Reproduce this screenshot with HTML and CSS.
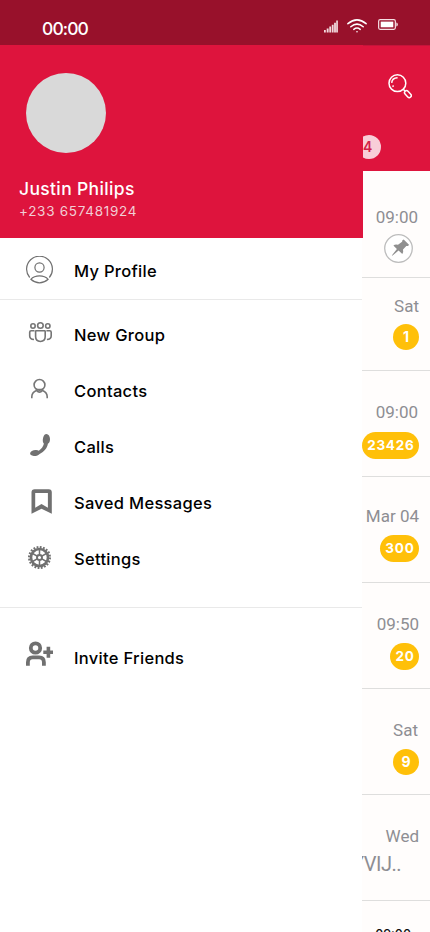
FILE: index.html
```html
<!DOCTYPE html>
<html lang="en">
<head>
<meta charset="utf-8">
<meta name="viewport" content="width=device-width, initial-scale=1">
<title>Messages</title>
<link rel="stylesheet" href="styles.css">
</head>
<body>
<div class="phone">
  <header class="status">
    <span class="clock">00:00</span>
    <div class="indicators">
      <svg class="signal" viewBox="0 0 14 13" fill="#f1d9dd"><path d="M0 10h1.800v2.500H0zM2.700 8.400h1.900v4.100H2.700zM5.300 6.600h1.800v5.900H5.300zM7.800 4.800h1.800v7.700H7.800zM10.100 2.700h1.800v9.800h-1.800zM12.200.5h1.700v12h-1.700z"/></svg>
      <svg class="wifi" viewBox="0 0 20 14" fill="none" stroke="#fff" stroke-width="1.500" stroke-linecap="round"><path d="M.9 4.700Q10-2.900 19.100 4.700M3.800 7.700Q10 2.500 16.200 7.700M6.800 10.400Q10 7.800 13.200 10.400"/><circle cx="10" cy="12.700" r=".8" fill="#fff" stroke="none"/></svg>
      <svg class="battery" viewBox="0 0 20 11"><rect x=".65" y=".65" width="16.700" height="9.700" rx="1.500" fill="none" stroke="#f6dfe3" stroke-width="1.200"/><rect x="2.700" y="2.600" width="12.600" height="5.700" fill="#fff"/><path d="M18.300 3.500q1.500 0 1.500 2t-1.500 2z" fill="#f6dfe3"/></svg>
    </div>
  </header>
  <div class="screen">
    <aside class="drawer">
      <div class="profile">
        <div class="avatar"></div>
        <div class="name">Justin Philips</div>
        <div class="number">+233 657481924</div>
      </div>
      <nav class="menu">
        <div class="group own">
          <a class="item"><svg class="icon" viewBox="0 0 28 28" fill="none" stroke="#707070" stroke-width="1.200"><path d="M3.700 21.500A12.900 12.900 0 1 1 23.300 21.500"/><circle cx="13.500" cy="11.500" r="4.600"/><path d="M4.800 23.300Q8 19.800 13.500 19.800t8.700 3.500Q18 26.900 13.500 26.900t-8.700-3.600z" stroke-linejoin="round"/></svg><span>My Profile</span></a>
        </div>
        <div class="group">
          <a class="item"><svg class="icon" viewBox="0 0 28 28" fill="none" stroke="#757575" stroke-width="1.600"><circle cx="7" cy="5" r="2.200"/><circle cx="14.400" cy="4.500" r="2.800"/><circle cx="21.800" cy="5" r="2.200"/><path d="M10.200 9.800h8.400q.6 0 .6.600v5.200q0 4.900-4.800 4.900t-4.800-4.900v-5.200q0-.6.600-.6zM8.500 9.800H5.200q-1.500 0-1.500 1.500v3.600q0 3.200 4.300 3.600M20.400 9.800h3.300q1.500 0 1.500 1.500v3.600q0 3.200-4.300 3.600"/></svg><span>New Group</span></a>
          <a class="item"><svg class="icon" viewBox="0 0 28 28" fill="none" stroke="#777" stroke-width="1.600"><circle cx="13.500" cy="7.900" r="5.400"/><path d="M5.800 21.200v-1.500q0-4.200 4.700-6.200 3 3.200 6 0 4.700 2 4.700 6.200v1.500M9.900 11.900q3.600 1.200 7.200 0"/></svg><span>Contacts</span></a>
          <a class="item"><svg class="icon" viewBox="0 0 28 28" fill="#707070"><path d="M20.300 1C22.600 1.200 24 3.400 24 6c0 2.300-.6 4.100-2.100 4.800-.6 4.200-3.600 7.900-8.300 10.100-1 1.400-3.400 2.100-5.800 2-2.500-.1-3.900-1.200-3.700-2.600.2-1.800 2.800-3.100 5.500-3.200 1.500-.1 2.600.3 3.200.7 2.500-1.700 4.400-4.200 5.100-7-.7-.7-1.200-2-1.100-3.700.2-3.300 1.700-6.300 3.500-6.100z"/></svg><span>Calls</span></a>
          <a class="item"><svg class="icon" viewBox="0 0 28 28"><path fill="#707070" fill-rule="evenodd" d="M8.700.2h14q3.100 0 3.100 3.100v21.400l-10.300-4.900-10 4.900V3.300q0-3.100 3.200-3.100zM9.200 4v14.800l6.300-3.700 6.400 3.700V4z"/></svg><span>Saved Messages</span></a>
          <a class="item"><svg class="icon" viewBox="0 0 28 28" fill="none" stroke="#707070"><circle cx="13.500" cy="12.500" r="8.500" stroke-width="2.600"/><circle cx="13.500" cy="12.500" r="10.400" stroke-width="2.200" stroke-dasharray="1.800 1.467"/><circle cx="13.500" cy="12.500" r="2.500" stroke-width="1.900"/><path d="M13.500 3.500v6.800M13.500 14.700v6.800M5.700 8l5.900 3.400M15.400 13.600l5.900 3.400M5.700 17l5.900-3.400M15.400 11.400L21.300 8" stroke-width="1.500"/></svg><span>Settings</span></a>
        </div>
        <div class="group invite">
          <a class="item"><svg class="icon" viewBox="0 0 28 28" fill="none" stroke="#707070" stroke-width="3.800"><circle cx="9.500" cy="8" r="4.700"/><path d="M1.900 25.700v-3.500q0-4.800 4.800-4.800h6.400q4.800 0 4.800 4.800v3.500"/><path d="M22.400 6.800v11M17.300 12.300h9.700" stroke-width="3.600"/></svg><span>Invite Friends</span></a>
        </div>
      </nav>
    </aside>
    <main class="chats">
      <div class="topbar">
        <svg class="search" viewBox="0 0 24 25" fill="none" stroke="#fff" stroke-width="1.500"><circle cx="9.400" cy="9.200" r="8.400"/><path d="M3.700 8.900Q4 3.900 9.600 3.700M4.600 11.500l.9 1.300M15.500 15.500l1.700 1.800"/><rect x="-2" y="-4" width="4" height="8" rx="2" transform="translate(19.900 20.100) rotate(-43)"/></svg>
        <span class="unread">4</span>
      </div>
      <div class="row first"><time>09:00</time><svg class="pin" viewBox="0 0 30 30"><circle cx="14.500" cy="15.500" r="13.800" fill="#fff" stroke="#bdbdbd" stroke-width="1.300"/><path fill="#8f8f8f" d="M18.400 7.300l1.300-.8 5.300 5.200-.9 1.400-1.800-.2-3.300 3.600q.7 2.600-.7 4.400l-3.700-3.500-6 5-.7.300.3-.8 4.700-6-3.500-3.500q1.900-1.500 4.600-.7l4.100-3z"/></svg></div>
      <div class="row second"><time>Sat</time><b class="badge small">1</b></div>
      <div class="row"><time>09:00</time><b class="badge">23426</b></div>
      <div class="row early"><time>Mar 04</time><b class="badge">300</b></div>
      <div class="row fifth"><time>09:50</time><b class="badge">20</b></div>
      <div class="row"><time>Sat</time><b class="badge small nine">9</b></div>
      <div class="row"><time>Wed</time><span class="preview">YVIJ..</span></div>
      <div class="row last"><time>09:00</time></div>
    </main>
  </div>
</div>
</body>
</html>
```

FILE: styles.css
```css
* { box-sizing: border-box; }
body { margin: 0; background: #fff; font-family: Inter, sans-serif; }
svg { display: block; flex: none; }
.phone { width: 430px; height: 932px; overflow: hidden; display: flex; flex-direction: column; }
.status { height: 45px; flex: none; background: #98112b; color: #fff; display: flex; justify-content: space-between; padding: 0 32px 0 42px; }
.clock { font-size: 17.5px; font-weight: 500; line-height: 22px; letter-spacing: -.9px; margin-top: 18px; }
.indicators { display: flex; align-items: flex-start; }
.signal { width: 14px; height: 13px; margin-top: 20px; }
.wifi { width: 20px; height: 14px; margin: 19px 0 0 9px; }
.battery { width: 20px; height: 11px; margin: 19px 0 0 11px; }
.screen { display: flex; flex: 1; min-height: 0; background: #fffdfc; }
.drawer { width: 362px; flex: none; background: #fff; display: flex; flex-direction: column; }
.profile { width: 363px; height: 193px; background: #de143d; padding: 28px 19px 0; flex: none; }
.avatar { width: 80px; height: 80px; border-radius: 50%; background: #d9d9d9; margin-left: 7px; }
.name { color: #fff; font-size: 17.5px; font-weight: 500; line-height: 22px; letter-spacing: .35px; margin-top: 25px; }
.number { color: #f1ced5; font-size: 13.5px; line-height: 17px; letter-spacing: .7px; margin-top: 3px; }
.menu { display: flex; flex-direction: column; }
.group { display: flex; flex-direction: column; padding: 7px 0 20px; border-bottom: 1px solid #e9e9e9; }
.group.own { padding: 4px 0 1px; }
.group.own span { padding-top: 2px; }
.group.invite { padding-top: 22px; border: 0; }
.group.invite .icon { margin-bottom: 9px; }
.item { height: 56px; display: flex; align-items: center; padding-left: 26px; gap: 20px; color: #000; font-size: 16.5px; font-weight: 500; line-height: 20px; letter-spacing: .3px; }
.icon { width: 28px; height: 28px; }
.item span { white-space: nowrap; }
.chats { width: 68px; flex: none; overflow: hidden; }
.topbar { width: 67px; height: 126px; margin-left: 1px; background: #de143d; display: flex; flex-direction: column; overflow: hidden; border-top: 1px solid #c5133a; }
.search { width: 24px; height: 25px; margin: 28px 0 0 25px; }
.unread { width: 24px; height: 24px; border-radius: 50%; background: #f8ced8; color: #d32047; font-size: 14px; font-weight: 600; line-height: 24px; margin: 36px 0 0 -6px; padding-left: 6px; }
.row { height: 106px; border-bottom: 1px solid #dededd; display: flex; flex-direction: column; align-items: flex-end; padding: 31px 11px 0 0; }
.row time { font: 17px/20px Roboto, sans-serif; color: #8e8e93; white-space: nowrap; }
.row.first { height: 107px; padding-top: 36px; }
.row.first time, .row.second + .row time { margin-right: 1px; }
.row.second { height: 93px; padding-top: 18px; }
.row.early { padding-top: 29px; }
.row.early .badge, .row.fifth .badge { margin-top: 9px; }
.pin { width: 30px; height: 30px; margin: 6px 5px 0 0; }
.badge { height: 27px; border-radius: 14px; background: #ffc009; color: #fff; font-size: 13.5px; font-weight: 700; letter-spacing: .75px; line-height: 27px; padding: 0 4.5px 0 5px; margin-top: 10px; }
.badge.small { width: 26px; height: 26px; font-size: 14px; line-height: 26px; padding: 0; text-align: center; margin-top: 8px; letter-spacing: 0; }
.badge.nine { margin-top: 9px; }
.row:has(.nine) time { margin-right: 1px; }
.preview { font: 20px/22px Roboto, sans-serif; letter-spacing: -.5px; color: #8e8e93; margin: 7px 18px 0 0; white-space: nowrap; }
.row.last { border: 0; padding: 24px 19px 0 0; }
.row.last time { font: 500 12.5px/20px Inter, sans-serif; color: #111; }
```
